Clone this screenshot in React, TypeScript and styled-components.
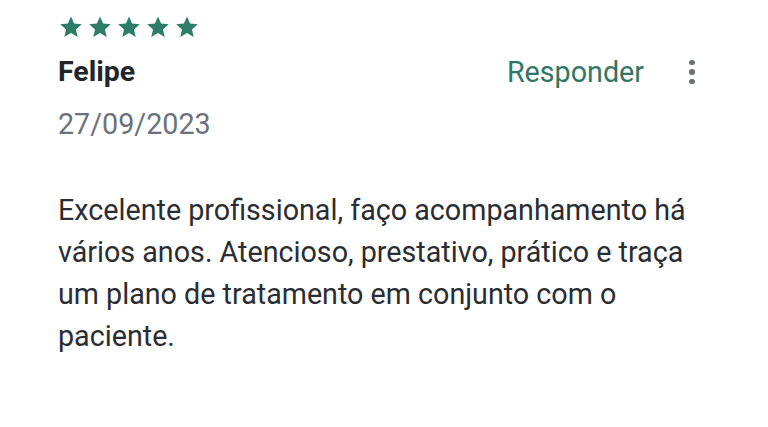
import { FC } from 'react';
import styled, { createGlobalStyle } from 'styled-components';

const GlobalStyle = createGlobalStyle`
  html, body {
    margin: 0;
    padding: 0;
    background: #ffffff;
  }
  body {
    font-family: Roboto, 'Noto Sans', sans-serif;
    -webkit-font-smoothing: antialiased;
  }
`;

const Card = styled.div`
  width: 768px;
  height: 427px;
  box-sizing: border-box;
  padding: 15px 68px 0 58px;
  background: #fff;
`;

const Stars = styled.div`
  display: flex;
  gap: 5px;
  margin-left: 1px;
  height: 24px;
`;

const HeaderRow = styled.div`
  display: flex;
  align-items: center;
  margin-top: 14px;
`;

const Name = styled.div`
  flex: 1;
  font-size: 28.5px;
  font-weight: 700;
  color: #22262b;
  line-height: 38px;
`;

const ReplyButton = styled.button`
  border: none;
  background: none;
  padding: 0;
  font-family: inherit;
  font-size: 28.7px;
  color: #2f7663;
  line-height: 38px;
  margin-right: 40px;
  cursor: pointer;
`;

const MenuButton = styled.button`
  border: none;
  background: none;
  padding: 0;
  width: 16px;
  display: flex;
  flex-direction: column;
  align-items: center;
  gap: 4px;
  cursor: pointer;
`;

const Dot = styled.span`
  width: 5.5px;
  height: 5.5px;
  border-radius: 50%;
  background: #6d727a;
`;

const DateText = styled.div`
  font-size: 28.7px;
  color: #6c727c;
  line-height: 38px;
  margin-top: 14px;
`;

const Body = styled.p`
  margin: 46px 0 0;
  max-width: 655px;
  font-size: 28.7px;
  line-height: 42px;
  color: #2a2d32;
`;

const Star: FC = () => (
  <svg width="24" height="24" viewBox="0 0 24 24" fill="#2e7d68">
    <path d="M12 1.5l3.1 7.1 7.7.7-5.8 5.1 1.7 7.6L12 18l-6.7 4 1.7-7.6-5.8-5.1 7.7-.7z" />
  </svg>
);

const App: FC = () => (
  <>
    <GlobalStyle />
    <Card>
      <Stars>
        {[0, 1, 2, 3, 4].map((i) => (
          <Star key={i} />
        ))}
      </Stars>
      <HeaderRow>
        <Name>Felipe</Name>
        <ReplyButton>Responder</ReplyButton>
        <MenuButton aria-label="Mais opções">
          <Dot />
          <Dot />
          <Dot />
        </MenuButton>
      </HeaderRow>
      <DateText>27/09/2023</DateText>
      <Body>
        Excelente profissional, faço acompanhamento há vários anos. Atencioso, prestativo, prático e
        traça um plano de tratamento em conjunto com o paciente.
      </Body>
    </Card>
  </>
);

export default App;
